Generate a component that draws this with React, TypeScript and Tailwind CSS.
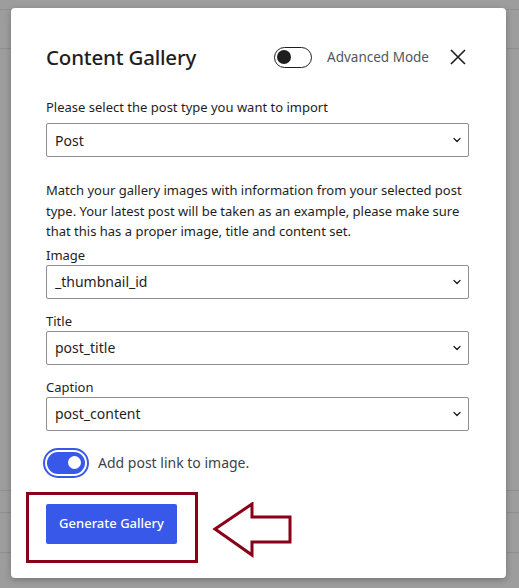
import { ChevronDown } from "lucide-react";

const font = { fontFamily: '"Noto Sans", "Open Sans", sans-serif' };

function Select({ value }: { value: string }) {
  return (
    <div className="flex items-center justify-between h-[34px] border border-[#8c8f94] rounded-[2px] pl-[8px] pr-[5px] text-[14px] text-[#1e1e1e]">
      <span>{value}</span>
      <ChevronDown size={12} strokeWidth={2.6} className="text-[#1e1e1e]" />
    </div>
  );
}

function Field({ label, value, gap = "mb-[2px]" }: { label: string; value: string; gap?: string }) {
  return (
    <div className="flex flex-col">
      <label className={`text-[13px] leading-[16px] text-[#1e1e1e] ${gap}`}>{label}</label>
      <Select value={value} />
    </div>
  );
}

export default function App() {
  return (
    <div className="relative w-[519px] h-[588px] overflow-hidden bg-[#9d9d9d]" style={font}>
      {/* page behind the overlay */}
      <div className="flex flex-col h-full">
        <div className="h-[10px] border-b border-[#8f8f8f]" />
        <div className="h-[39px] border-b border-[#8f8f8f]" />
        <div className="h-[442px] border-b border-[#8f8f8f]" />
        <div className="h-[22px] border-b border-[#8f8f8f]" />
        <div className="h-[40px] border-b border-[#8f8f8f]" />
        <div className="flex-1" />
      </div>

      <div className="absolute left-[11px] top-[8px] w-[495px] h-[570px] bg-white rounded-[4px] shadow-[0_2px_6px_rgba(0,0,0,0.25)] pl-[35px] pr-[37px] pt-[31px]">
        <div className="flex items-center h-[36px]">
          <h1 className="text-[20.5px] font-medium text-[#1e1e1e] tracking-[-0.2px]">Content Gallery</h1>
          <div className="ml-auto flex items-center">
            <div className="w-[38px] h-[21px] rounded-full border border-[#1e1e1e] flex items-center pl-[2px]">
              <div className="w-[14px] h-[14px] rounded-full bg-[#1e1e1e]" />
            </div>
            <span className="ml-[15px] text-[13.5px] text-[#50575e]">Advanced Mode</span>
            <svg width="18" height="18" viewBox="0 0 18 18" className="ml-[20px] mr-[2px]">
              <path d="M2 2 L16 16 M16 2 L2 16" stroke="#1e1e1e" strokeWidth="1.6" fill="none" />
            </svg>
          </div>
        </div>

        <div className="mt-[24px]">
          <Field label="Please select the post type you want to import" value="Post" gap="mb-[8px]" />
        </div>

        <p className="mt-[23px] text-[13px] leading-[20.5px] text-[#1e1e1e]">
          Match your gallery images with information from your selected post type. Your latest post will be taken as an
          example, please make sure that this has a proper image, title and content set.
        </p>

        <div className="mt-[5px] flex flex-col gap-[14px]">
          <Field label="Image" value="_thumbnail_id" />
          <Field label="Title" value="post_title" />
          <Field label="Caption" value="post_content" />
        </div>

        <div className="mt-[17px] flex items-center">
          <div className="ml-[-3px] rounded-full border-2 border-[#3858e9] p-[2px]">
            <div className="w-[38px] h-[22px] rounded-full bg-[#3858e9] flex items-center justify-end pr-[4px]">
              <div className="w-[13px] h-[13px] rounded-full bg-white" />
            </div>
          </div>
          <span className="ml-[9px] text-[14px] text-[#3c434a]">Add post link to image.</span>
        </div>

        <div className="mt-[14px] flex items-center">
          <div className="ml-[-20px] w-[172px] h-[71px] border-[3px] border-[#8a0019] pl-[17px] pt-[9px]">
            <button className="h-[40px] w-[131px] rounded-[2px] bg-[#3858e9] text-white text-[13px] font-medium">
              Generate Gallery
            </button>
          </div>
          <svg width="82" height="56" viewBox="0 0 82 56" className="ml-[14px] mt-[6px]">
            <path
              d="M3 27 L40 2 L40 15 L78 15 L78 40 L40 40 L40 53 Z"
              stroke="#8a0019"
              strokeWidth="3"
              fill="white"
              strokeLinejoin="miter"
            />
          </svg>
        </div>
      </div>
    </div>
  );
}
